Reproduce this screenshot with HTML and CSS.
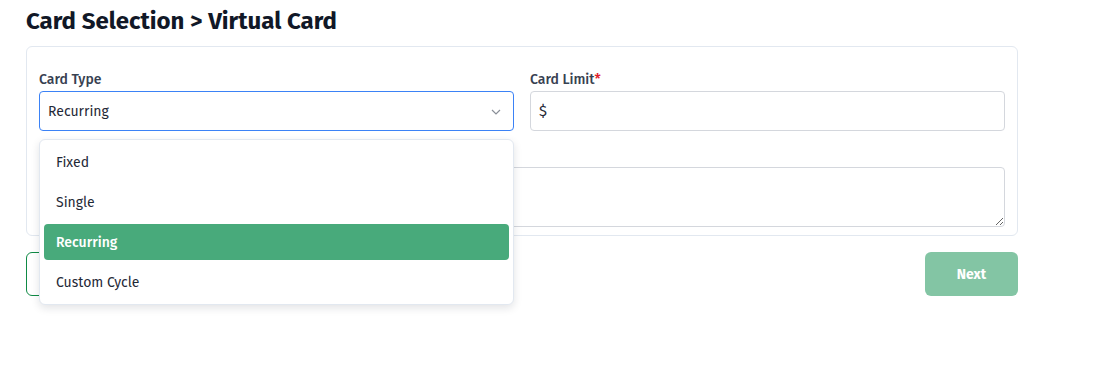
FILE: index.html
```html
<!DOCTYPE html>
<html>
<head>
<meta charset="utf-8">
<link rel="stylesheet" href="styles.css">
</head>
<body>
<div class="page">
  <h1 class="title">Card Selection &gt; Virtual Card</h1>
  <div class="card">
    <div class="row">
      <div class="field">
        <label class="label">Card Type</label>
        <div class="select-wrap">
          <div class="select">
            <span>Recurring</span>
            <svg class="chevron" width="10" height="6" viewBox="0 0 10 6"><path d="M1 1l4 4 4-4" fill="none" stroke="#8a8f98" stroke-width="1.2"/></svg>
          </div>
          <ul class="menu">
            <li class="opt">Fixed</li>
            <li class="opt">Single</li>
            <li class="opt active">Recurring</li>
            <li class="opt">Custom Cycle</li>
          </ul>
        </div>
      </div>
      <div class="field">
        <label class="label">Card Limit<span class="req">*</span></label>
        <div class="input"><span>$</span></div>
      </div>
    </div>
    <div class="field">
      <div class="label label-hidden"></div>
      <textarea class="textarea"></textarea>
    </div>
  </div>
  <div class="actions">
    <button class="btn btn-outline"></button>
    <button class="btn btn-primary">Next</button>
  </div>
</div>
</body>
</html>
```
FILE: styles.css
```css
* { box-sizing: border-box; }
html, body { height: 100%; }
body {
  margin: 0;
  background: #fff;
  font-family: "Fira Sans", "Roboto", sans-serif;
  color: #1f2937;
}
.page {
  width: 992px;
  margin-left: 26px;
  padding-top: 7px;
  padding-bottom: 80px;
}
.title {
  margin: 0 0 10px 0;
  font-size: 24px;
  line-height: 29px;
  font-weight: 700;
  color: #111827;
}
.card {
  border: 1px solid #e2e8f0;
  border-radius: 6px;
  padding: 24px 12px 8px 12px;
  display: flex;
  flex-direction: column;
}
.row {
  display: flex;
  gap: 16px;
}
.row .field { flex: 1; }
.field { display: flex; flex-direction: column; }
.label {
  font-size: 14px;
  font-weight: 500;
  color: #374151;
  line-height: 18px;
  margin-bottom: 2px;
}
.label-hidden { height: 18px; margin-top: 18px; margin-bottom: 0; }
.req { color: #e11d2a; }
.select-wrap { position: relative; }
.select {
  height: 40px;
  border: 1px solid #3b82f6;
  border-radius: 4px;
  display: flex;
  align-items: center;
  justify-content: space-between;
  padding: 0 12px 0 8px;
  font-size: 14px;
  color: #1f2937;
}
.chevron { margin-top: 1px; }
.input {
  height: 40px;
  border: 1px solid #d4d7dd;
  border-radius: 4px;
  display: flex;
  align-items: center;
  padding: 0 8px;
  font-size: 15px;
  color: #1f2937;
}
.textarea {
  height: 60px;
  border: 1px solid #d4d7dd;
  border-radius: 4px;
  resize: vertical;
  font-family: inherit;
  display: block;
  width: 100%;
}
.menu {
  position: absolute;
  top: 48px;
  left: 0;
  right: 0;
  margin: 0;
  padding: 4px;
  list-style: none;
  background: #fff;
  border: 1px solid #e2e8f0;
  border-radius: 6px;
  box-shadow: 0 3px 8px rgba(15, 23, 42, 0.12);
  display: flex;
  flex-direction: column;
  gap: 4px;
  z-index: 5;
}
.opt {
  height: 36px;
  display: flex;
  align-items: center;
  padding-left: 12px;
  font-size: 14px;
  color: #1f2937;
  border-radius: 4px;
}
.opt.active {
  background: #48aa7b;
  color: #fff;
  font-weight: 500;
}
.actions {
  display: flex;
  justify-content: space-between;
  margin-top: 16px;
}
.btn {
  height: 44px;
  width: 93px;
  border-radius: 6px;
  font-family: inherit;
  font-size: 14px;
  font-weight: 700;
}
.btn-outline {
  background: #fff;
  border: 1.5px solid #0f8a45;
  color: #0f8a45;
}
.btn-primary {
  background: #83c5a4;
  border: none;
  color: #fff;
}
```
